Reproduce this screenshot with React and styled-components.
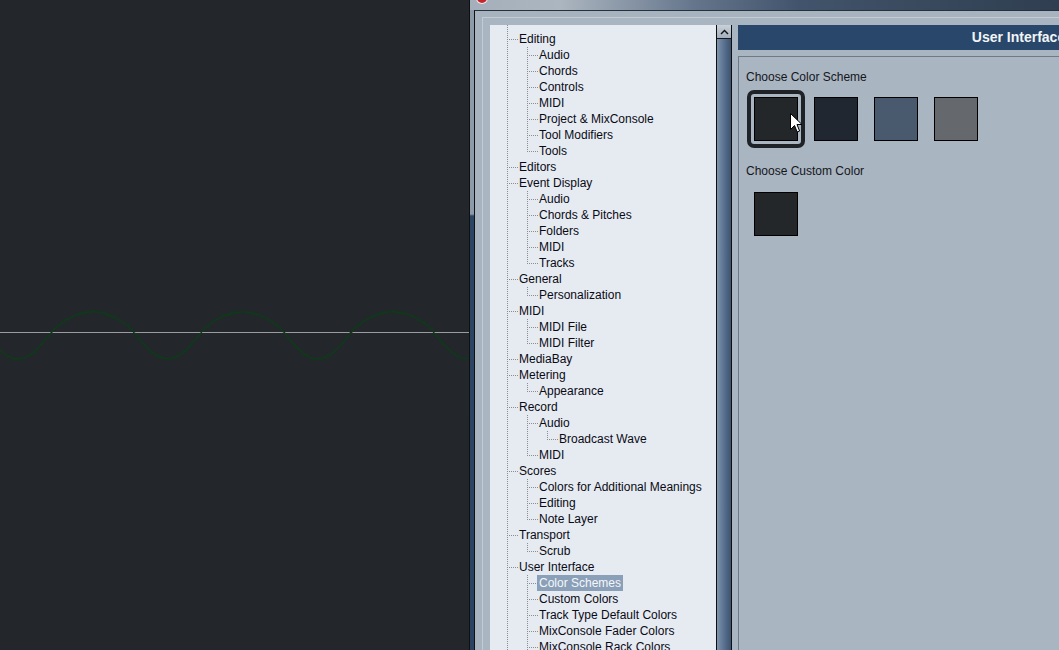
import React from 'react';
import styled, { createGlobalStyle } from 'styled-components';

const GlobalStyle = createGlobalStyle`
  html, body {
    margin: 0;
    padding: 0;
    background: #23272b;
    overflow: hidden;
  }
  body {
    font-family: "Liberation Sans", Arial, sans-serif;
  }
`;

const Screen = styled.div`
  display: flex;
  width: 1059px;
  height: 650px;
  overflow: hidden;
`;

const TrackPane = styled.div`
  flex: none;
  width: 469px;
  height: 100%;
  background: #23272b;
  border-right: 1px solid #0d0f11;
`;

const Dialog = styled.div`
  flex: none;
  display: flex;
  flex-direction: column;
  height: 100%;
  background: linear-gradient(to bottom, #8e9aa8 0, #8e9aa8 214px, #2c4562 216px, #2b4360 100%);
`;

const TitleBar = styled.div`
  flex: none;
  height: 10px;
  display: flex;
  padding-left: 7px;
  overflow: hidden;
  background: linear-gradient(
    to right,
    #a4afbb 0px,
    #acb6c0 90px,
    #62738a 230px,
    #42546b 330px,
    #2f3e50 589px
  );
`;

const AppIcon = styled.span`
  width: 10px;
  height: 10px;
  margin-top: -7px;
  border-radius: 50%;
  background: #c4262c;
  box-shadow: 0 0 0 1px #f1e6e6;
`;

const Body = styled.div`
  flex: 1;
  display: flex;
  padding-left: 4px;
  min-height: 0;
`;

const Client = styled.div`
  flex: 1;
  display: flex;
  background: #a7b3bf;
  border-left: 1px solid #0f1114;
  border-top: 1px solid #27313c;
  padding: 6px 0 0 7px;
  min-height: 0;
`;

const Group = styled.div`
  flex: 1;
  display: flex;
  background: #a9b5c1;
  border-top: 1px solid #c3ccd5;
  border-left: 1px solid #c3ccd5;
  padding: 7px 0 0 7px;
  min-height: 0;
`;

const Tree = styled.div`
  flex: none;
  width: 226px;
  padding: 6px 0 0 17px;
  box-sizing: border-box;
  overflow: hidden;
  background-color: #e6ebf2;
  background-image: linear-gradient(to bottom, #8a8d92 50%, transparent 50%);
  background-size: 1px 2px;
  background-position: 17px 0;
  background-repeat: repeat-y;
`;

const Row = styled.div`
  display: flex;
  align-items: center;
  height: 16px;
`;

const Guide = styled.span`
  flex: none;
  width: 20px;
  height: 16px;
  background-image: ${p => (p.$on ? 'linear-gradient(to bottom, #8a8d92 50%, transparent 50%)' : 'none')};
  background-size: 1px 2px;
  background-repeat: repeat-y;
`;

const Elbow = styled.span`
  position: relative;
  flex: none;
  width: 12px;
  height: 16px;

  &::before {
    content: '';
    position: absolute;
    left: 0;
    top: 8px;
    width: 11px;
    height: 1px;
    background: linear-gradient(to right, #8a8d92 50%, transparent 50%);
    background-size: 2px 1px;
  }

  &::after {
    content: '';
    position: absolute;
    left: 0;
    top: 0;
    width: 1px;
    height: ${p => (p.$hasNext ? 16 : 9)}px;
    display: ${p => (p.$depth > 1 ? 'block' : 'none')};
    background: linear-gradient(to bottom, #8a8d92 50%, transparent 50%);
    background-size: 1px 2px;
  }
`;

const Label = styled.span`
  margin-left: -2px;
  padding: 1px 2px 0;
  height: 15px;
  line-height: 15px;
  font-size: 12px;
  white-space: nowrap;
  color: ${p => (p.$selected ? '#f5f7fa' : '#0a0a14')};
  background: ${p => (p.$selected ? '#8a9fb8' : 'transparent')};
`;

const ScrollTrack = styled.div`
  flex: none;
  width: 14px;
  display: flex;
  flex-direction: column;
  border-left: 1px solid #0c0e10;
  border-right: 1px solid #0c0e10;
  margin-right: 6px;
`;

const UpButton = styled.div`
  flex: none;
  height: 13px;
  display: flex;
  align-items: center;
  justify-content: center;
  border-bottom: 1px solid #15191d;
  background: linear-gradient(to bottom, #c9d0d8, #a3afbc);
`;

const Thumb = styled.div`
  flex: 1;
  background: linear-gradient(to right, #8194ab 0%, #677e9c 30%, #4d6482 70%, #3d536f 100%);
`;

const MainPanel = styled.div`
  flex: none;
  width: 561px;
  display: flex;
  flex-direction: column;
`;

const Header = styled.div`
  flex: none;
  height: 25px;
  line-height: 25px;
  background: #28476a;
  color: #f2f5f8;
  font-size: 14px;
  font-weight: bold;
  text-align: center;
`;

const Content = styled.div`
  flex: 1;
  margin-top: 6px;
  padding: 13px 0 0 7px;
  border-top: 1px solid #6e7a87;
  border-left: 1px solid #6e7a87;
  background: #a9b5c1;
`;

const SectionLabel = styled.div`
  font-size: 12px;
  line-height: 15px;
  color: #15151c;
  margin-top: ${p => p.$gap || 0}px;
`;

const SwatchRow = styled.div`
  display: flex;
  gap: 2px;
  margin: ${p => p.$top || 5}px 0 0 1px;
`;

const SwatchFrame = styled.div`
  position: relative;
  padding: 3px;
  border: 4px solid ${p => (p.$selected ? '#1f2327' : 'transparent')};
  border-radius: 7px;
`;

const Swatch = styled.div`
  width: 42px;
  height: 42px;
  border: 1px solid #000;
  background: ${p => p.$color};
`;

const Cursor = styled.svg`
  position: absolute;
  left: 39px;
  top: 19px;
`;

const tree = [
  { label: 'Editing', children: ['Audio', 'Chords', 'Controls', 'MIDI', 'Project & MixConsole', 'Tool Modifiers', 'Tools'] },
  { label: 'Editors' },
  { label: 'Event Display', children: ['Audio', 'Chords & Pitches', 'Folders', 'MIDI', 'Tracks'] },
  { label: 'General', children: ['Personalization'] },
  { label: 'MIDI', children: ['MIDI File', 'MIDI Filter'] },
  { label: 'MediaBay' },
  { label: 'Metering', children: ['Appearance'] },
  { label: 'Record', children: [{ label: 'Audio', children: ['Broadcast Wave'] }, 'MIDI'] },
  { label: 'Scores', children: ['Colors for Additional Meanings', 'Editing', 'Note Layer'] },
  { label: 'Transport', children: ['Scrub'] },
  {
    label: 'User Interface',
    children: [
      'Color Schemes',
      'Custom Colors',
      'Track Type Default Colors',
      'MixConsole Fader Colors',
      'MixConsole Rack Colors',
      'MixConsole Channel Colors',
    ],
  },
  { label: 'VST', children: ['Plug-ins', 'Metronome'] },
  { label: 'Video' },
];

function flatten(nodes, depth = 1, guides = [], out = []) {
  nodes.forEach((n, i) => {
    const node = typeof n === 'string' ? { label: n } : n;
    const hasNext = i < nodes.length - 1;
    out.push({ label: node.label, depth, guides, hasNext });
    if (node.children) flatten(node.children, depth + 1, [...guides, hasNext], out);
  });
  return out;
}

const rows = flatten(tree);

const schemes = ['#23272a', '#202731', '#4a5a6e', '#65696d'];

function wavePath() {
  const pts = [];
  for (let x = 0; x <= 469; x += 2) {
    const t = ((x - 51.7) % 150 + 150) % 150;
    let y;
    if (t < 82) y = 332 - 20 * Math.pow(Math.sin((Math.PI * t) / 82), 0.8);
    else y = 332 + 27 * Math.sin((Math.PI * (t - 82)) / 68);
    y += Math.sin(x * 1.7) * 0.9;
    pts.push(`${x},${Math.round(y)}`);
  }
  return 'M' + pts.join(' L');
}

function TrackView() {
  return (
    <TrackPane>
      <svg width="469" height="650">
        <line x1="0" y1="332.5" x2="469" y2="332.5" stroke="#9a9da0" strokeWidth="1" />
        <path d={wavePath()} fill="none" stroke="#0e3a19" strokeWidth="1.5" />
      </svg>
    </TrackPane>
  );
}

export default function App() {
  return (
    <>
      <GlobalStyle />
      <Screen>
        <TrackView />
        <Dialog>
          <TitleBar>
            <AppIcon />
          </TitleBar>
          <Body>
            <Client>
              <Group>
                <Tree>
                  {rows.map((r, i) => (
                    <Row key={i}>
                      {r.guides.map((on, k) => (
                        <Guide key={k} $on={on && k > 0} />
                      ))}
                      <Elbow $depth={r.depth} $hasNext={r.hasNext} />
                      <Label $selected={r.label === 'Color Schemes'}>{r.label}</Label>
                    </Row>
                  ))}
                </Tree>
                <ScrollTrack>
                  <UpButton>
                    <svg width="9" height="6" viewBox="0 0 9 6">
                      <path d="M1 5 L4.5 1.5 L8 5" fill="none" stroke="#111" strokeWidth="1.4" />
                    </svg>
                  </UpButton>
                  <Thumb />
                </ScrollTrack>
                <MainPanel>
                  <Header>User Interface</Header>
                  <Content>
                    <SectionLabel>Choose Color Scheme</SectionLabel>
                    <SwatchRow $top={5}>
                      {schemes.map((c, i) => (
                        <SwatchFrame key={c} $selected={i === 0}>
                          <Swatch $color={c} />
                          {i === 0 && (
                            <Cursor width="13" height="21" viewBox="0 0 13 21">
                              <path
                                d="M0.5 0.5 L0.5 16.5 L4.5 12.5 L7.2 19 L9.6 18 L7 11.5 L12 11.5 Z"
                                fill="#fff"
                                stroke="#000"
                                strokeWidth="1"
                              />
                            </Cursor>
                          )}
                        </SwatchFrame>
                      ))}
                    </SwatchRow>
                    <SectionLabel $gap={16}>Choose Custom Color</SectionLabel>
                    <SwatchRow $top={6}>
                      <SwatchFrame>
                        <Swatch $color="#23272a" />
                      </SwatchFrame>
                    </SwatchRow>
                  </Content>
                </MainPanel>
              </Group>
            </Client>
          </Body>
        </Dialog>
      </Screen>
    </>
  );
}
